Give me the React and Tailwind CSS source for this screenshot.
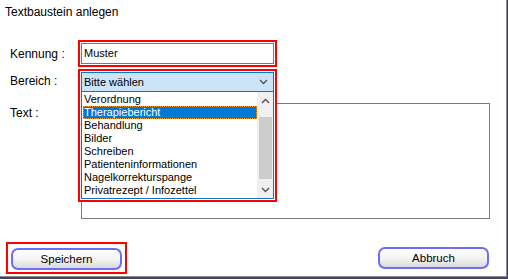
import React from 'react';

const items = [
  'Verordnung',
  'Therapiebericht',
  'Behandlung',
  'Bilder',
  'Schreiben',
  'Patienteninformationen',
  'Nagelkorrekturspange',
  'Privatrezept / Infozettel',
];

const Chevron = ({ up = false, className = '' }) => (
  <svg width="9" height="6" viewBox="0 0 9 6" className={className}>
    <path
      d={up ? 'M1 5 L4.5 1.5 L8 5' : 'M1 1 L4.5 4.5 L8 1'}
      fill="none"
      stroke="#505050"
      strokeWidth="1.3"
    />
  </svg>
);

const AppButton = ({ children }) => (
  <button className="w-[111px] h-[22px] rounded-[7px] border-2 border-[#6e6cfa] bg-gradient-to-b from-white via-[#f4f4f4] to-[#dadada] text-[11.5px] leading-[14px] text-black">
    {children}
  </button>
);

const App = () => {
  return (
    <div className="w-[508px] h-[279px] bg-[#47425c] overflow-hidden" style={{ fontFamily: '"Liberation Sans", Arial, sans-serif' }}>
      <div className="w-[507px] h-[277px] bg-white border-r border-b border-[#8a8a8a] flex flex-col text-black">
        {/* Title */}
        <div className="pl-[5px] pt-[5px] h-[24px] text-[12px] leading-[15px]">Textbaustein anlegen</div>

        <div className="mt-[16px] pr-[16px] flex flex-col">
          {/* Kennung */}
          <div className="flex items-center h-[27px]">
            <div className="w-[78px] pl-[10px] text-[12px]">Kennung :</div>
            <div className="w-[199px] h-[27px] border-2 border-[#ff0000] p-[1px]">
              <div className="h-full border border-[#7a7a7a] flex items-center pl-[2px] text-[11px]">Muster</div>
            </div>
          </div>

          {/* Bereich */}
          <div className="flex items-start h-[23px] mt-[2px]">
            <div className="w-[78px] pl-[10px] pt-[5px] text-[12px] leading-[14px]">Bereich :</div>
            <div className="relative w-[199px] h-[23px] z-10">
              <div className="absolute left-0 top-0 w-[199px] border-2 border-[#ff0000] p-[1px] bg-white">
                <div className="h-[20px] bg-[#cce4f7] border border-[#0078d7] flex items-center justify-between pl-[2px] pr-[5px] text-[11px]">
                  <span>Bitte wählen</span>
                  <Chevron />
                </div>
                <div className="h-[107px] border border-[#0078d7] border-t-0 flex bg-white">
                  <div className="flex-1 flex flex-col pt-[1px] pl-[1px]">
                    {items.map((it) => (
                      <div
                        key={it}
                        className={
                          it === 'Therapiebericht'
                            ? 'h-[13px] leading-[12px] text-[11px] pl-[1px] bg-[#0078d7] text-white outline-1 outline-dotted outline-[#f39a2e] -outline-offset-1'
                            : 'h-[13px] leading-[12px] text-[11px] pl-[1px]'
                        }
                      >
                        {it}
                      </div>
                    ))}
                  </div>
                  <div className="w-[16px] bg-[#f0f0f0] flex flex-col items-center">
                    <div className="h-[17px] flex items-center justify-center">
                      <Chevron up />
                    </div>
                    <div className="mt-[8px] w-[13px] h-[62px] bg-[#cdcdcd]" />
                    <div className="mt-auto h-[16px] flex items-center justify-center">
                      <Chevron />
                    </div>
                  </div>
                </div>
              </div>
            </div>
          </div>

          {/* Text */}
          <div className="flex items-start mt-[11px]">
            <div className="w-[81px] pl-[10px] pt-[3px] text-[12px] leading-[14px]">Text :</div>
            <div className="flex-1 h-[116px] border border-[#7a7a7a]" />
          </div>
        </div>

        {/* Buttons */}
        <div className="mt-[23px] flex items-center justify-between pl-[6px] pr-[17px]">
          <div className="border-2 border-[#ff0000] px-[3px] py-[2px]">
            <AppButton>Speichern</AppButton>
          </div>
          <AppButton>Abbruch</AppButton>
        </div>
      </div>
    </div>
  );
};

export default App;
